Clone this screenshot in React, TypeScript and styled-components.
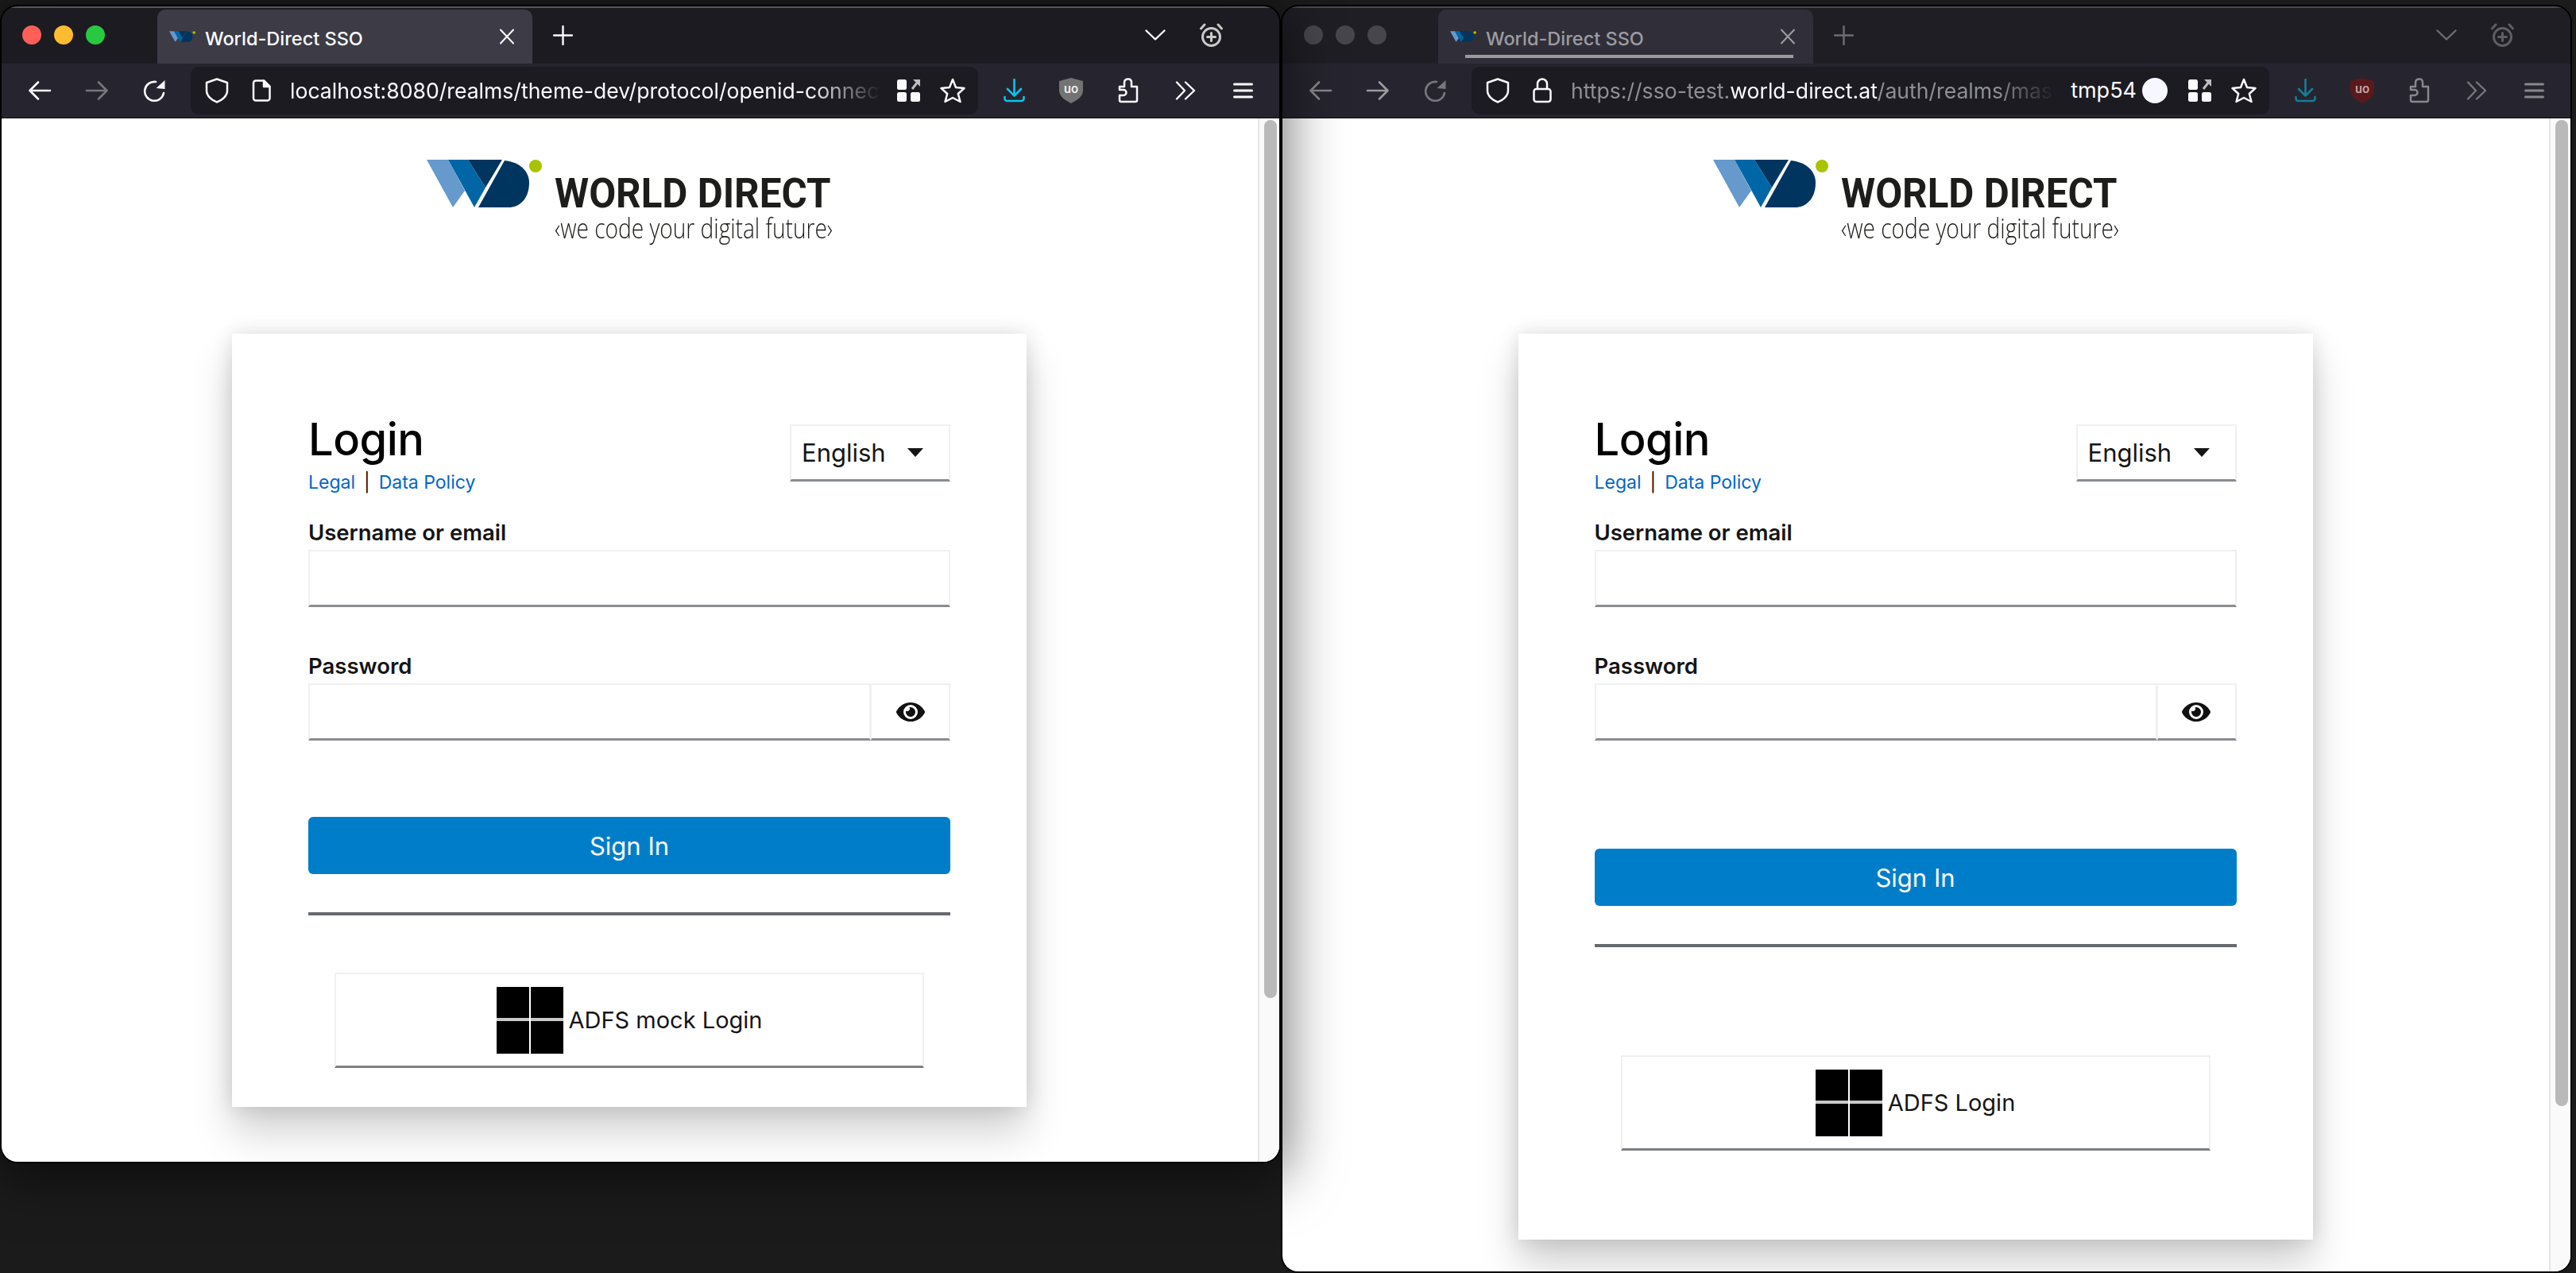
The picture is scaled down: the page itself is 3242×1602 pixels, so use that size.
import React from "react";
import styled, { createGlobalStyle } from "styled-components";
import { FaEye } from "react-icons/fa";

const Global = createGlobalStyle`
  html, body { margin: 0; padding: 0; background: #1b1b1b; overflow: hidden; }
  * { box-sizing: border-box; }
`;

const Stage = styled.div`
  width: 3242px;
  height: 1602px;
  display: flex;
  align-items: flex-start;
  gap: 4px;
  padding: 8px 7px 0 2px;
  background: #1b1b1b;
  font-family: Inter, "Liberation Sans", sans-serif;
  overflow: hidden;
`;

const Win = styled.section<{ $w: number; $h: number; $focused?: boolean }>`
  flex: 0 0 ${(p) => p.$w}px;
  height: ${(p) => p.$h}px;
  display: flex;
  flex-direction: column;
  border-radius: 20px;
  overflow: hidden;
  position: relative;
  z-index: ${(p) => (p.$focused ? 2 : 1)};
  background: #1c1b22;
  box-shadow: ${(p) => (p.$focused ? "0 0 0 2px #000, 0 12px 70px 8px rgba(0,0,0,.55)" : "0 0 0 2px #000")};
`;

const TitleBar = styled.div<{ $focused?: boolean }>`
  flex: 0 0 72px;
  display: flex;
  align-items: stretch;
  padding-left: 26px;
  background: ${(p) => (p.$focused ? "#1c1b22" : "#1f1e25")};
  border-top: 2px solid ${(p) => (p.$focused ? "#57565b" : "#4a4950")};
`;

const Lights = styled.div<{ $focused?: boolean }>`
  display: flex;
  align-items: center;
  gap: 16px;
  width: 170px;
  height: 68px;
  padding-left: ${(p) => (p.$focused ? 0 : 1)}px;
`;

const Light = styled.span<{ $c: string }>`
  width: 24px;
  height: 24px;
  border-radius: 50%;
  background: ${(p) => p.$c};
`;

const Tab = styled.div<{ $focused?: boolean }>`
  position: relative;
  flex: 0 0 472px;
  margin-top: 2px;
  display: flex;
  align-items: center;
  padding: 0 22px 0 15px;
  gap: 12px;
  border-radius: 10px 10px 0 0;
  background: ${(p) => (p.$focused ? "#3d3b46" : "#302f39")};
  color: ${(p) => (p.$focused ? "#fbfbfe" : "#9d9ca3")};
  font-size: 23.5px;
  font-weight: 500;
`;

const TabLabel = styled.span`
  flex: 1;
  white-space: nowrap;
  padding-top: 4px;
`;

const TabLine = styled.span`
  position: absolute;
  left: 34px;
  right: 25px;
  bottom: 7px;
  height: 4px;
  background: #9a9aa0;
`;

const TabRest = styled.div`
  flex: 1;
  display: flex;
  align-items: center;
  height: 68px;
  padding-left: 2px;
`;

const Glyph = styled.span<{ $c?: string; $w?: number }>`
  display: flex;
  align-items: center;
  justify-content: center;
  flex: ${(p) => (p.$w ? `0 0 ${p.$w}px` : "none")};
  color: ${(p) => p.$c || "#fbfbfe"};
  svg { display: block; }
`;

const TabSpacer = styled.span`
  flex: 1;
`;

const Toolbar = styled.div`
  flex: 0 0 69px;
  display: flex;
  align-items: center;
  padding: 0 10px 1px 12px;
  background: #26252f;
  border-bottom: 1px solid #0c0c0e;
`;

const UrlBar = styled.div`
  flex: 1;
  height: 60px;
  margin: 0 9px 0 10px;
  padding: 0 16px 0 18px;
  display: flex;
  align-items: center;
  border-radius: 10px;
  background: #1c1b22;
  min-width: 0;
`;

const UrlText = styled.div`
  flex: 1;
  min-width: 0;
  margin: 0 20px 0 24px;
  overflow: hidden;
  white-space: nowrap;
  font-size: 26.6px;
  color: #8f8f97;
  -webkit-mask-image: linear-gradient(90deg, #000 88%, transparent 100%);
  mask-image: linear-gradient(90deg, #000 88%, transparent 100%);
`;

const UrlStrong = styled.span`
  color: #fbfbfe;
`;

const UrlIconGap = styled.span<{ $w: number }>`
  flex: 0 0 ${(p) => p.$w}px;
`;

const ContainerName = styled.span`
  font-size: 27px;
  color: #fbfbfe;
  margin-right: 7px;
`;

const ContainerDot = styled.span`
  width: 32px;
  height: 32px;
  border-radius: 50%;
  background: #f7f7ff;
  margin-right: 26px;
`;

const Body = styled.div`
  flex: 1;
  display: flex;
  min-height: 0;
  background: #fff;
`;

const Page = styled.main`
  flex: 1;
  display: flex;
  flex-direction: column;
  align-items: center;
  padding: 52px 1px 0 0;
  min-width: 0;
`;

const Track = styled.div`
  flex: 0 0 27px;
  padding: 2px 3px 0 6px;
  background: #fafafa;
  border-left: 2px solid #e6e6e6;
`;

const Thumb = styled.div<{ $h: number }>`
  height: ${(p) => p.$h}px;
  border-radius: 9px;
  background: #b9b9b9;
`;

const Brand = styled.div`
  width: 510px;
  height: 219px;
  flex: none;
  display: flex;
  align-items: flex-start;
  gap: 16px;
`;

const BrandText = styled.div`
  display: flex;
  flex-direction: column;
  width: 349px;
`;

const BrandName = styled.div`
  font-family: Roboto, sans-serif;
  font-weight: 700;
  font-size: 52px;
  line-height: 60px;
  margin-top: 13px;
  color: #1d1d1b;
  white-space: nowrap;
  transform-origin: left center;
  transform: scaleX(0.948);
`;

const BrandTag = styled.div`
  font-family: "Open Sans", sans-serif;
  font-weight: 300;
  font-size: 34px;
  line-height: 38px;
  margin-top: -6px;
  color: #1d1d1b;
  white-space: nowrap;
  transform-origin: left center;
  transform: scaleX(0.826);
`;

const Card = styled.div<{ $pb: number }>`
  width: 1000px;
  flex: none;
  padding: 100px 96px ${(p) => p.$pb}px;
  background: #fff;
  box-shadow: 0 32px 48px rgba(3, 3, 3, 0.18), 0 0 24px rgba(3, 3, 3, 0.13);
`;

const CardHead = styled.div`
  height: 130px;
  display: flex;
  justify-content: space-between;
  align-items: flex-start;
`;

const Heading = styled.h1`
  margin: -3px 0 1px;
  font-size: 56px;
  line-height: 72px;
  font-weight: 500;
  color: #000;
  letter-spacing: -0.5px;
`;

const LegalRow = styled.div`
  display: flex;
  align-items: center;
  gap: 11px;
  font-size: 23px;
  line-height: 34px;
  color: #111;
`;

const LegalLink = styled.a`
  color: #0066cc;
  text-decoration: none;
`;

const LangSelect = styled.div`
  width: 202px;
  height: 72px;
  margin-top: 14px;
  padding: 0 32px 0 13px;
  display: flex;
  align-items: center;
  justify-content: space-between;
  border: 2px solid #f0f0f0;
  border-bottom: 3px solid #8a8d90;
  font-size: 31px;
  color: #151515;
`;

const Caret = styled.span`
  width: 0;
  height: 0;
  border-left: 10px solid transparent;
  border-right: 10px solid transparent;
  border-top: 11px solid #151515;
`;

const FieldLabel = styled.label`
  display: block;
  height: 42px;
  padding-top: 2px;
  font-size: 27.5px;
  line-height: 36px;
  font-weight: 600;
  color: #151515;
`;

const Field = styled.div`
  margin-bottom: 54px;
`;

const InputGroup = styled.div`
  display: flex;
  height: 72px;
`;

const InputBox = styled.div`
  flex: 1;
  background: #fff;
  border: 2px solid #f0f0f0;
  border-bottom: 3px solid #8a8d90;
`;

const EyeButton = styled.div`
  flex: 0 0 100px;
  display: flex;
  align-items: center;
  justify-content: center;
  border: 2px solid #f0f0f0;
  border-left-width: 1px;
  border-bottom: 3px solid #8a8d90;
  color: #111;
`;

const SignIn = styled.div<{ $mt: number }>`
  height: 72px;
  margin-top: ${(p) => p.$mt}px;
  display: flex;
  align-items: center;
  justify-content: center;
  border-radius: 6px;
  background: #007dc9;
  color: #fff;
  font-size: 31px;
`;

const Rule = styled.hr<{ $mb: number }>`
  height: 4px;
  margin: 48px 0 ${(p) => p.$mb}px;
  border: 0;
  background: #66696e;
`;

const IdpButton = styled.div`
  height: 120px;
  margin: 0 33px;
  display: flex;
  align-items: center;
  justify-content: center;
  gap: 7px;
  border: 2px solid #f0f0f0;
  border-bottom: 3px solid #7c7f83;
  font-size: 29px;
  color: #151515;
`;

/* ---- drawings ---- */

type P = { size?: number };

const Logo = ({ w = 145, h = 60 }: { w?: number; h?: number }) => (
  <svg width={w} height={h} viewBox="0 0 145 60" style={{ flex: "none" }}>
    <polygon points="0,0 27,0 48,39 33,60" fill="#6699cc" />
    <polygon points="27,0 52,0 74,35 60,60" fill="#0066a6" />
    <polygon points="52,0 95,0 74,35" fill="#00355f" />
    <path d="M98 1C118 3 129 15 129 29C129 48 118 60 103 60L65 60Z" fill="#00355f" />
    <ellipse cx="137" cy="8" rx="8" ry="8" fill="#a8c300" />
  </svg>
);

const ArrowL = () => (
  <svg width="30" height="24" viewBox="0 0 30 24" fill="none" stroke="currentColor" strokeWidth="2.6" strokeLinecap="round" strokeLinejoin="round">
    <path d="M28 12H3M13 1.5 2.5 12 13 22.5" />
  </svg>
);
const ArrowR = () => (
  <svg width="30" height="24" viewBox="0 0 30 24" fill="none" stroke="currentColor" strokeWidth="2.6" strokeLinecap="round" strokeLinejoin="round">
    <path d="M2 12H27M17 1.5 27.5 12 17 22.5" />
  </svg>
);
const Reload = () => (
  <svg width="28" height="28" viewBox="0 0 28 28" fill="none" stroke="currentColor" strokeWidth="2.6" strokeLinecap="round">
    <path d="M26 17A12 12 0 1 1 16 3" />
    <polygon points="27.5,1 27.5,12 16.5,11" fill="currentColor" stroke="none" />
  </svg>
);
const Shield = () => (
  <svg width="30" height="32" viewBox="0 0 30 32" fill="none" stroke="currentColor" strokeWidth="2.5" strokeLinejoin="round">
    <path d="M15 1.5 28 6V16C28 23 21 28.5 15 30.5 9 28.5 2 23 2 16V6Z" />
  </svg>
);
const PageIcon = () => (
  <svg width="24" height="28" viewBox="0 0 24 28" fill="none" stroke="currentColor" strokeWidth="2.5" strokeLinejoin="round">
    <path d="M5 1.5H15L22.5 9V23.5a3 3 0 0 1-3 3H5a3 3 0 0 1-3-3V4.5a3 3 0 0 1 3-3Z" />
    <path d="M15 1.5V9H22.5Z" fill="currentColor" />
  </svg>
);
const Lock = () => (
  <svg width="24" height="32" viewBox="0 0 24 32" fill="none" stroke="currentColor" strokeWidth="2.5">
    <rect x="1.5" y="14" width="21" height="16" rx="3" />
    <path d="M6 14V7.5a6 6 0 0 1 12 0V14" />
  </svg>
);
const PanelGrid = () => (
  <svg width="29" height="28" viewBox="0 0 29 28">
    <rect x="0" y="0" width="12" height="13" rx="2.5" fill="#fbfbfe" />
    <rect x="0" y="16" width="12" height="12" rx="2.5" fill="#fbfbfe" />
    <rect x="17" y="16" width="12" height="12" rx="2.5" fill="#fbfbfe" />
    <polygon points="20,0 29,0 29,9" fill="#bdbdc0" />
    <path d="M19 12 26 3" stroke="#bdbdc0" strokeWidth="3" />
  </svg>
);
const Star = () => (
  <svg width="32" height="32" viewBox="0 0 32 32" fill="none" stroke="#fbfbfe" strokeWidth="2.5" strokeLinejoin="round">
    <polygon points="16,2 20,12 30.5,13 22.8,20 25.5,30 16,25 6.5,30 9.2,20 1.5,13 12,12" />
  </svg>
);
const Download = () => (
  <svg width="27" height="30" viewBox="0 0 27 30" fill="none" stroke="currentColor" strokeWidth="2.6" strokeLinecap="round" strokeLinejoin="round">
    <path d="M13.5 1V21M5 13 13.5 21.5 22 13" />
    <path d="M1.5 23V25a3 3 0 0 0 3 3H22.5a3 3 0 0 0 3-3V23" />
  </svg>
);
const UBlock = ({ fill, ink }: { fill: string; ink: string }) => (
  <svg width="30" height="32" viewBox="0 0 30 32">
    <path d="M15 0 30 4V16C30 24 21 29 15 32 9 29 0 24 0 16V4Z" fill={fill} />
    <text x="15" y="19" textAnchor="middle" fontFamily="Roboto, sans-serif" fontSize="16" fontWeight="500" fill={ink}>uo</text>
  </svg>
);
const Puzzle = () => (
  <svg width="26" height="32" viewBox="0 0 26 32" fill="none" stroke="currentColor" strokeWidth="2.5" strokeLinejoin="round">
    <path d="M2 11H8V6C8 3 10 1.5 13 1.5 16 1.5 17 4 17 6V11H24V28a2 2 0 0 1-2 2H4a2 2 0 0 1-2-2V22H7a3.5 3.5 0 0 0 0-7H2Z" />
  </svg>
);
const Chevrons = () => (
  <svg width="26" height="24" viewBox="0 0 26 24" fill="none" stroke="currentColor" strokeWidth="2.4" strokeLinecap="round" strokeLinejoin="round">
    <path d="M2 1.5 12 12 2 22.5M13 1.5 24 12 13 22.5" />
  </svg>
);
const Burger = () => (
  <svg width="25" height="20" viewBox="0 0 25 20" stroke="currentColor" strokeWidth="3" strokeLinecap="round">
    <path d="M1.5 2H23.5M1.5 10H23.5M1.5 18H23.5" />
  </svg>
);
const ChevronDown = () => (
  <svg width="26" height="14" viewBox="0 0 26 14" fill="none" stroke="currentColor" strokeWidth="2.4" strokeLinecap="round" strokeLinejoin="round">
    <path d="M1.5 1.5 13 12.5 24.5 1.5" />
  </svg>
);
const Alarm = () => (
  <svg width="29" height="30" viewBox="0 0 29 30" fill="none" stroke="currentColor" strokeWidth="3" strokeLinecap="round">
    <circle cx="14.5" cy="17.5" r="11" />
    <path d="M14.5 12.5V22.5M9.5 17.5H19.5" />
    <path d="M1.5 7 6 2M23 2 27.5 7" />
  </svg>
);
const Cross = () => (
  <svg width="20" height="20" viewBox="0 0 20 20" stroke="currentColor" strokeWidth="2" strokeLinecap="round">
    <path d="M2 1.5 18 18.5M18 1.5 2 18.5" />
  </svg>
);
const Plus = ({ size = 25 }: P) => (
  <svg width={size} height={size} viewBox="0 0 25 25" stroke="currentColor" strokeWidth="2.4" strokeLinecap="round">
    <path d="M12.5 1V24M1 12.5H24" />
  </svg>
);
const WindowsMark = () => (
  <svg width="84" height="84" viewBox="0 0 84 84" style={{ flex: "none" }}>
    <rect width="84" height="84" fill="#c9c9c9" />
    <rect x="41" width="2" height="84" fill="#fff" />
    <rect x="0" y="0" width="41" height="39" fill="#000" />
    <rect x="43" y="0" width="41" height="39" fill="#000" />
    <rect x="0" y="43" width="41" height="41" fill="#000" />
    <rect x="43" y="43" width="41" height="41" fill="#000" />
  </svg>
);

/* ---- parts ---- */

type WinCfg = {
  focused?: boolean;
  w: number;
  h: number;
  thumb: number;
  signInMt: number;
  ruleMb: number;
  cardPb: number;
  idp: string;
};

const LoginCard = ({ cfg }: { cfg: WinCfg }) => (
  <Card $pb={cfg.cardPb}>
    <CardHead>
      <div>
        <Heading>Login</Heading>
        <LegalRow>
          <LegalLink>Legal</LegalLink>
          <span>|</span>
          <LegalLink>Data Policy</LegalLink>
        </LegalRow>
      </div>
      <LangSelect>
        English
        <Caret />
      </LangSelect>
    </CardHead>
    <Field>
      <FieldLabel>Username or email</FieldLabel>
      <InputGroup>
        <InputBox />
      </InputGroup>
    </Field>
    <div>
      <FieldLabel>Password</FieldLabel>
      <InputGroup>
        <InputBox />
        <EyeButton>
          <FaEye size={36} />
        </EyeButton>
      </InputGroup>
    </div>
    <SignIn $mt={cfg.signInMt}>Sign In</SignIn>
    <Rule $mb={cfg.ruleMb} />
    <IdpButton>
      <WindowsMark />
      {cfg.idp}
    </IdpButton>
  </Card>
);

const BrowserWindow = ({ cfg }: { cfg: WinCfg }) => {
  const f = cfg.focused;
  const btn = (c: string, el: React.ReactNode) => (
    <Glyph $w={72} $c={c}>
      {el}
    </Glyph>
  );
  return (
    <Win $w={cfg.w} $h={cfg.h} $focused={f}>
      <TitleBar $focused={f}>
        <Lights $focused={f}>
          <Light $c={f ? "#ff5f57" : "#47464c"} />
          <Light $c={f ? "#febc2e" : "#47464c"} />
          <Light $c={f ? "#28c840" : "#47464c"} />
        </Lights>
        <Tab $focused={f}>
          <Logo w={33} h={14} />
          <TabLabel>World-Direct SSO</TabLabel>
          <Glyph $c={f ? "#fbfbfe" : "#9d9ca3"}>
            <Cross />
          </Glyph>
          {!f && <TabLine />}
        </Tab>
        <TabRest>
          <Glyph $w={72} $c={f ? "#fbfbfe" : "#6e6d74"}>
            <Plus />
          </Glyph>
          <TabSpacer />
          <Glyph $w={70} $c={f ? "#fbfbfe" : "#6e6d74"}>
            <ChevronDown />
          </Glyph>
          <Glyph $w={70} $c={f ? "#c9c9c9" : "#5f5e64"}>
            <Alarm />
          </Glyph>
          <UrlIconGap $w={51} />
        </TabRest>
      </TitleBar>
      <Toolbar>
        {btn(f ? "#fbfbfe" : "#85858b", <ArrowL />)}
        {btn(f ? "#77767c" : "#9a9a9f", <ArrowR />)}
        {btn(f ? "#fbfbfe" : "#78777d", <Reload />)}
        <UrlBar>
          <Glyph>
            <Shield />
          </Glyph>
          <UrlIconGap $w={29} />
          <Glyph>{f ? <PageIcon /> : <Lock />}</Glyph>
          {f ? (
            <UrlText>
              <UrlStrong>localhost:8080/realms/theme-dev/protocol/openid-connect/auth?client_id=account</UrlStrong>
            </UrlText>
          ) : (
            <UrlText>
              https://sso-test.<UrlStrong>world-direct.at</UrlStrong>/auth/realms/master/protocol/openid-connect/auth
            </UrlText>
          )}
          {!f && (
            <>
              <ContainerName>tmp54</ContainerName>
              <ContainerDot />
            </>
          )}
          <Glyph>
            <PanelGrid />
          </Glyph>
          <UrlIconGap $w={25} />
          <Glyph>
            <Star />
          </Glyph>
        </UrlBar>
        {btn(f ? "#0cc4e8" : "#147d96", <Download />)}
        {btn("", f ? <UBlock fill="#737373" ink="#f2f2f2" /> : <UBlock fill="#5a191c" ink="#c9a9a9" />)}
        {btn(f ? "#fbfbfe" : "#88878d", <Puzzle />)}
        {btn(f ? "#fbfbfe" : "#77767c", <Chevrons />)}
        {btn(f ? "#fbfbfe" : "#88878d", <Burger />)}
      </Toolbar>
      <Body>
        <Page>
          <Brand>
            <Logo />
            <BrandText>
              <BrandName>WORLD DIRECT</BrandName>
              <BrandTag>‹we code your digital future›</BrandTag>
            </BrandText>
          </Brand>
          <LoginCard cfg={cfg} />
        </Page>
        <Track>
          <Thumb $h={cfg.thumb} />
        </Track>
      </Body>
    </Win>
  );
};

const windows: WinCfg[] = [
  { focused: true, w: 1608, h: 1454, thumb: 1105, signInMt: 96, ruleMb: 72, cardPb: 49, idp: "ADFS mock Login" },
  { w: 1621, h: 1592, thumb: 1241, signInMt: 136, ruleMb: 136, cardPb: 112, idp: "ADFS Login" },
];

export default function App() {
  return (
    <Stage>
      <Global />
      {windows.map((cfg) => (
        <BrowserWindow key={cfg.idp} cfg={cfg} />
      ))}
    </Stage>
  );
}
